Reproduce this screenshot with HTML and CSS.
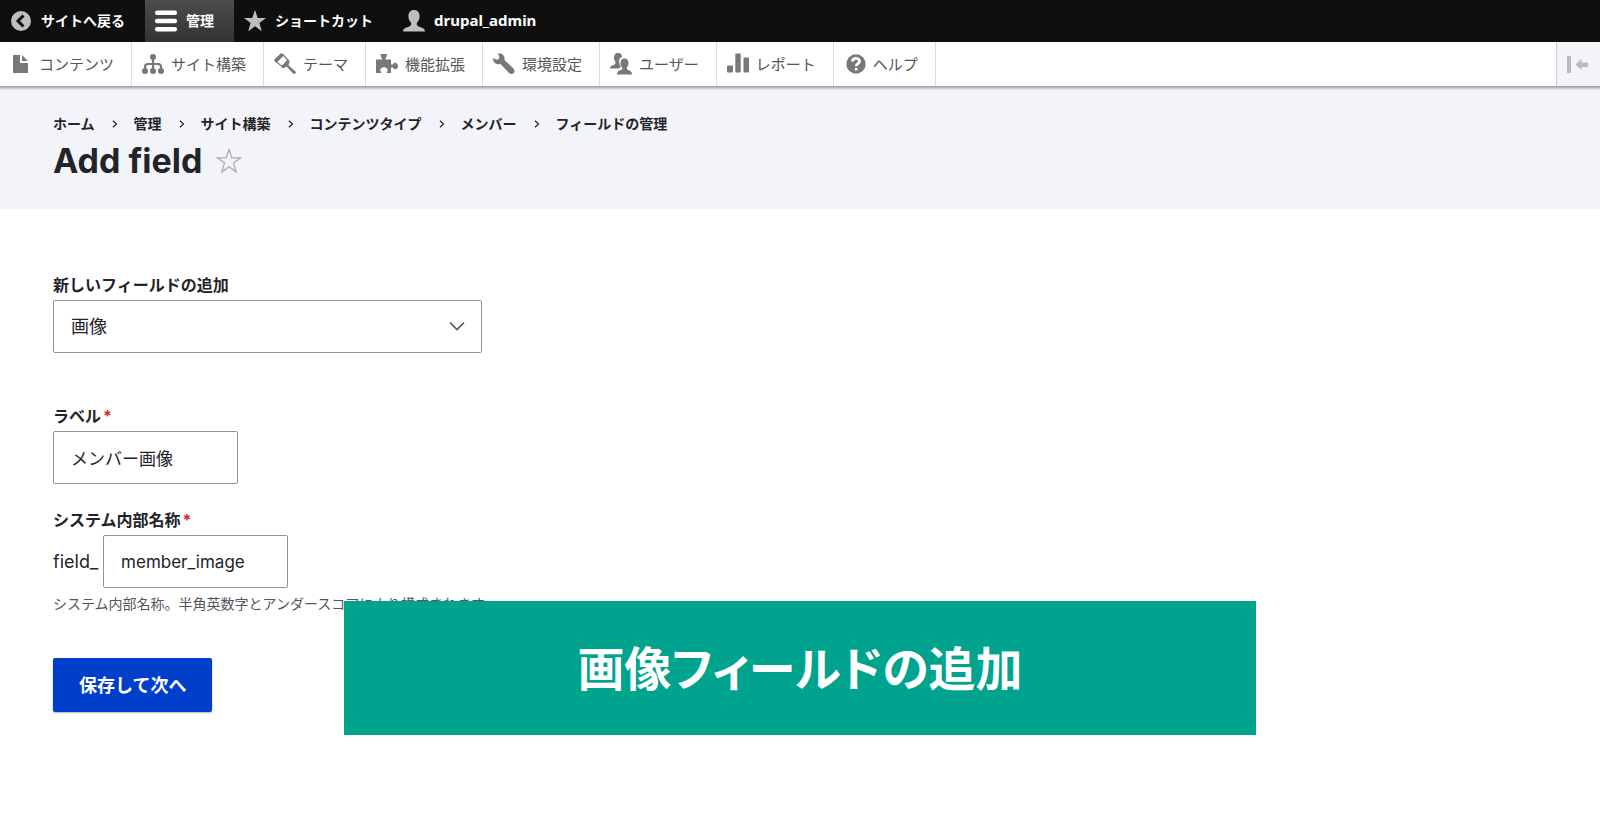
FILE: index.html
```html
<!DOCTYPE html>
<html lang="ja">
<head>
<meta charset="utf-8">
<meta name="viewport" content="width=device-width, initial-scale=1">
<title>Add field</title>
<link rel="stylesheet" href="styles.css">
</head>
<body>
<nav class="bar" aria-label="ツールバー">
  <a class="tab" href="#"><svg class="icon" viewBox="0 0 22 22"><circle cx="11" cy="11" r="10"/><path class="cut" d="M13.500 5.500 8 11l5.500 5.500" stroke-width="3"/></svg><span class="text-up">サイトへ戻る</span></a>
  <a class="tab tab-active" href="#"><svg class="icon" viewBox="0 0 22 22"><rect y="0.500" width="22" height="4.500" rx="2"/><rect y="8.800" width="22" height="4.500" rx="2"/><rect y="17" width="22" height="4.500" rx="2"/></svg><span class="text-up">管理</span></a>
  <a class="tab" href="#"><svg class="icon" viewBox="0 0 22 22"><path d="m11 0 2.700 7.900H22l-6.600 5 2.400 8.300L11 16.200l-6.800 5 2.400-8.300L0 7.900h8.300z"/></svg><span class="text-up">ショートカット</span></a>
  <a class="tab tab-user" href="#"><svg class="icon" viewBox="0 0 22 22"><path d="M11 0c3.700 0 5.600 2.700 5.600 6.300 0 2.700-1.200 5-2.700 6.400-.5 1.800.1 2.900 1.800 3.700 3 1.300 6.300 1.600 6.300 5.100H0c0-3.500 3.300-3.800 6.300-5.100 1.700-.8 2.300-1.900 1.800-3.700C6.600 11.300 5.400 9 5.400 6.300 5.400 2.700 7.300 0 11 0z"/></svg><span class="text-up">drupal_admin</span></a>
</nav>
<nav class="tray" aria-label="管理メニュー">
  <a class="item" href="#"><svg class="icon" viewBox="0 0 22 22"><path d="M3 2h7v8h8v10H3zM12 2v6h6z"/></svg><span class="text-up">コンテンツ</span></a>
  <a class="item" href="#"><svg class="icon" viewBox="0 0 22 22"><circle cx="11" cy="4" r="3"/><circle cx="3" cy="18" r="3"/><circle cx="11" cy="18" r="3"/><circle cx="19" cy="18" r="3"/><path class="line" d="M11 4v14M3 18v-4q0-3 3-3h10q3 0 3 3v4" stroke-width="2.200"/></svg><span class="text-up">サイト構築</span></a>
  <a class="item" href="#"><svg class="icon" viewBox="0 0 22 22"><path d="M0 7 7 0l3 2.200L2.200 10z"/><path class="line" d="m2 8.500 7-7 5 6-6 6z" stroke-width="1.200"/><path d="m7 13.800 7-7.300 1.800 1.600-1.300 4.200 7 6.200q1 1.500-.9 2.500-1 .2-1.800-.8l-6.200-6.700-3.800 2z"/></svg><span class="text-up">テーマ</span></a>
  <a class="item" href="#"><svg class="icon" viewBox="0 0 22 22"><path d="M0 6.500h6V5Q4.500 4 4.500 1h6.500Q11 4 9.500 5v1.500H15v5h2q.5-1.800 2-1.800c2 0 3 1.300 3 3.300s-1 3.300-3 3.300q-1.500 0-2-1.800h-2V20h-4.300v-1q1-.5 1-1.800c0-1.800-1.500-3-3.700-3s-3.700 1.200-3.700 3q0 1.300 1 1.800v1H0z"/></svg><span class="text-up">機能拡張</span></a>
  <a class="item" href="#"><svg class="icon" viewBox="0 0 22 22"><path d="M0 5c1.500 1 3.800 2.300 5.500 1.300C7 5 6.500 2.500 4.500.8c4-1.200 7.800 1.400 7 6.200l9 8.500c3 3.300-1 7.500-4.500 4.500l-8.500-9C3.500 12.200-.5 9.500 0 5z"/></svg><span class="text-up">環境設定</span></a>
  <a class="item" href="#"><svg class="icon" viewBox="0 0 22 22"><path d="M8 0c2.600 0 4 1.600 4 4-2.300.8-3.300 2.800-2.900 5.600.3 1.600.9 2.800 1.700 3.800-.1 1-1.300 1.400-2.800 2H0c0-3 2.500-3 4.700-4 1-.6 1.200-1.400.8-2.300C4.500 8 4 6.600 4 4.800 4 1.800 5.400 0 8 0z"/><path d="M14.500 5.500c2.700 0 4 1.900 4 4.500 0 2-.8 3.500-1.700 4.500-.3 1.300 0 2 1.200 2.500 2 .8 4 1.300 4 4.500H7c0-3.200 2-3.700 4-4.500 1.200-.5 1.500-1.200 1.200-2.500-.9-1-1.700-2.500-1.700-4.500 0-2.600 1.300-4.500 4-4.500z"/></svg><span class="text-up">ユーザー</span></a>
  <a class="item" href="#"><svg class="icon" viewBox="0 0 22 22"><rect y="12.500" width="6" height="7" rx="1"/><rect x="8.300" y="0.500" width="5.400" height="19" rx="1"/><rect x="16.500" y="4.500" width="5.500" height="15" rx="1"/></svg><span class="text-up">レポート</span></a>
  <a class="item" href="#"><svg class="icon" viewBox="0 0 22 22"><circle cx="12" cy="11" r="9.700"/><path class="cut" d="M8.500 8.500c0-4 7-4 7-.3 0 2.500-3.300 2.500-3.300 5M12.200 15v2.600" stroke-width="2.800"/></svg><span class="text-up">ヘルプ</span></a>
  <button class="collapse" type="button" aria-label="縦方向"><svg class="icon" viewBox="0 0 22 22"><rect y="3" width="4" height="17"/><path d="m8.500 11.500 6-5.500v3.500H21v4.500h-6.500V17z"/></svg></button>
</nav>
<header class="header">
  <nav class="crumbs" aria-label="パンくず">
    <a href="#">ホーム</a><svg class="sep" viewBox="0 0 6 8"><path d="m1 .7 3.500 3.300L1 7.300"/></svg>
    <a href="#">管理</a><svg class="sep" viewBox="0 0 6 8"><path d="m1 .7 3.500 3.300L1 7.300"/></svg>
    <a href="#">サイト構築</a><svg class="sep" viewBox="0 0 6 8"><path d="m1 .7 3.500 3.300L1 7.300"/></svg>
    <a href="#">コンテンツタイプ</a><svg class="sep" viewBox="0 0 6 8"><path d="m1 .7 3.500 3.300L1 7.300"/></svg>
    <a href="#">メンバー</a><svg class="sep" viewBox="0 0 6 8"><path d="m1 .7 3.500 3.300L1 7.300"/></svg>
    <a href="#">フィールドの管理</a>
  </nav>
  <div class="title-row">
    <h1 class="title">Add field</h1>
    <button class="fav" type="button" aria-label="ショートカットに追加"><svg viewBox="0 0 26 26"><path d="m13 1.500 2.800 8.300h8.700l-7 5.300 2.700 9L13 18.800l-7.200 5.300 2.700-9-7-5.300h8.700z"/></svg></button>
  </div>
</header>
<main class="main">
  <form class="form">
    <div class="field field-type">
      <label class="label" for="type">新しいフィールドの追加</label>
      <div class="select">
        <select class="control" id="type"><option>画像</option></select>
        <svg class="chevron" viewBox="0 0 16 10"><path d="m1 1.500 7 7 7-7"/></svg>
      </div>
    </div>
    <div class="field">
      <label class="label" for="label">ラベル<span class="req">*</span></label>
      <input class="control text" id="label" type="text" value="メンバー画像">
    </div>
    <div class="field field-name">
      <label class="label" for="name">システム内部名称<span class="req">*</span></label>
      <div class="prefixed"><span>field_</span><input class="control text" id="name" type="text" value="member_image"></div>
      <p class="hint">システム内部名称。半角英数字とアンダースコアにより構成されます。</p>
    </div>
    <button class="submit" type="button">保存して次へ</button>
  </form>
</main>
<div class="banner">画像フィールドの追加</div>
</body>
</html>
```
FILE: styles.css
```css
* { box-sizing: border-box; }
body {
  margin: 0;
  color: #232429;
  background: #fff;
  font-family: Inter, "Noto Sans CJK JP", sans-serif;
}
a { color: inherit; text-decoration: none; }
button { border: 0; cursor: pointer; font-family: inherit; }

.bar, .tray { font-family: "Noto Sans", "Noto Sans CJK JP", sans-serif; }
.bar {
  display: flex;
  height: 42px;
  color: #fff;
  background: #0f0f0f;
  font-size: 14px;
  font-weight: 700;
}
.icon { flex: none; width: 22px; height: 22px; fill: currentColor; }
.text-up { padding-bottom: 2px; }
.line { fill: none; stroke: currentColor; }
.cut { fill: none; stroke: #0f0f0f; }
.item .cut { stroke: #fff; }
.tab { display: flex; align-items: center; gap: 9px; padding: 0 20px 0 10px; }
.tab-user { font-size: 15px; }
.tab .icon { color: #bebebe; }
.tab-active { background: linear-gradient(#4c4c4c, #333); }
.tab-active .icon { color: #fff; }

.tray {
  position: relative;
  display: flex;
  height: 44px;
  color: #565656;
  background: #fff;
  box-shadow: 0 0 3px 2px rgba(0, 0, 0, 0.4);
  clip-path: inset(0 0 -8px 0);
  font-size: 15px;
}
.item {
  display: flex;
  align-items: center;
  gap: 7px;
  padding: 0 17px 0 10px;
  border-right: 1px solid #ddd;
}
.item .icon { color: #787878; }
.collapse {
  display: flex;
  align-items: center;
  width: 44px;
  margin-left: auto;
  padding: 0 10px;
  border-left: 1px solid #ccc;
  background: #f3f4f9;
  color: #bbb;
}

.header { padding: 26px 53px 27px; background: #f3f4f9; }
.crumbs {
  display: flex;
  align-items: center;
  font-size: 14px;
  font-weight: 700;
  line-height: 24px;
}
.sep { width: 6px; height: 8px; margin: 0 16px 0 17px; fill: none; stroke: #232429; stroke-width: 1.2; }
.title-row { display: flex; align-items: center; gap: 14px; padding-top: 4px; }
.title { margin: 0; font-size: 34px; font-weight: 700; line-height: 42px; }
.fav { display: flex; padding: 0; background: none; }
.fav svg { width: 26px; height: 26px; fill: none; stroke: #aaabaf; stroke-width: 1.3; }

.main { padding: 64px 53px; }
.form { display: flex; flex-direction: column; align-items: flex-start; }
.field { margin-bottom: 24px; }
.field-type { margin-bottom: 51px; }
.field-name { margin-bottom: 42px; }
.label { display: block; margin-bottom: 3px; font-size: 16px; font-weight: 700; line-height: 24px; }
.req { margin-left: 2px; color: #dc2323; }
.control {
  display: block;
  height: 53px;
  padding: 0 17px;
  border: 1px solid #919297;
  border-radius: 2px;
  color: #232429;
  background: #fff;
  font-family: inherit;
  font-size: 18px;
}
.select { position: relative; width: 429px; max-width: 100%; }
.select .control { width: 100%; appearance: none; }
.chevron {
  position: absolute;
  top: 21px;
  right: 17px;
  width: 16px;
  height: 10px;
  fill: none;
  stroke: #545560;
  stroke-width: 1.7;
  pointer-events: none;
}
.text { width: 185px; font-size: 17px; }
.prefixed { display: flex; align-items: center; gap: 5px; font-size: 18px; }
.hint { margin: 4px 0 0; color: #55565b; font-size: 14px; line-height: 24px; }
.submit {
  height: 54px;
  padding: 0 26px 3px;
  border-radius: 2px;
  color: #fff;
  background: #003ecc;
  box-shadow: 0 1px 2px rgba(0, 0, 0, 0.3);
  font-size: 18px;
  font-weight: 700;
}

.banner {
  position: absolute;
  right: 0;
  bottom: 99px;
  left: 0;
  width: 57%;
  margin: 0 auto;
  padding: 29px 0 33px;
  color: #fff;
  background: #00a38d;
  font-family: "Noto Sans CJK JP", sans-serif;
  font-size: 47px;
  font-weight: 700;
  font-feature-settings: "palt";
  line-height: 72px;
  text-align: center;
}
```
